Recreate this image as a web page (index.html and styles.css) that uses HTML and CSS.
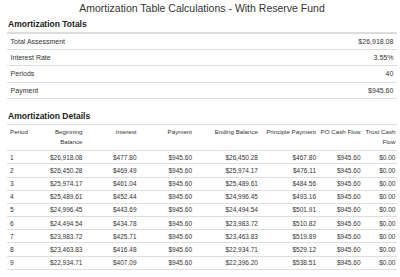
FILE: index.html
```html
<!DOCTYPE html>
<html>
<head>
<meta charset="utf-8">
<title>Amortization Table Calculations</title>
<link rel="stylesheet" href="styles.css">
</head>
<body>
<div class="page">
  <h1 class="title">Amortization Table Calculations - With Reserve Fund</h1>

  <h2 class="section">Amortization Totals</h2>
  <table class="totals">
    <tbody>
      <tr><td>Total Assessment</td><td class="num">$26,918.08</td></tr>
      <tr><td>Interest Rate</td><td class="num">3.55%</td></tr>
      <tr><td>Periods</td><td class="num">40</td></tr>
      <tr><td>Payment</td><td class="num">$945.60</td></tr>
    </tbody>
  </table>

  <h2 class="section section-details">Amortization Details</h2>
  <table class="details">
    <colgroup>
      <col class="c1"><col class="c2"><col class="c3"><col class="c4">
      <col class="c5"><col class="c6"><col class="c7"><col class="c8">
    </colgroup>
    <thead>
      <tr>
        <th class="left one">Period</th>
        <th>Beginning Balance</th>
        <th class="one">Interest</th>
        <th class="one">Payment</th>
        <th class="one">Ending Balance</th>
        <th class="one">Principle Payment</th>
        <th class="one">PO Cash Flow</th>
        <th>Trust Cash Flow</th>
      </tr>
    </thead>
    <tbody>
      <tr><td class="left">1</td><td>$26,918.08</td><td>$477.80</td><td>$945.60</td><td>$26,450.28</td><td>$467.80</td><td>$945.60</td><td>$0.00</td></tr>
      <tr><td class="left">2</td><td>$26,450.28</td><td>$469.49</td><td>$945.60</td><td>$25,974.17</td><td>$476.11</td><td>$945.60</td><td>$0.00</td></tr>
      <tr><td class="left">3</td><td>$25,974.17</td><td>$461.04</td><td>$945.60</td><td>$25,489.61</td><td>$484.56</td><td>$945.60</td><td>$0.00</td></tr>
      <tr><td class="left">4</td><td>$25,489.61</td><td>$452.44</td><td>$945.60</td><td>$24,996.45</td><td>$493.16</td><td>$945.60</td><td>$0.00</td></tr>
      <tr><td class="left">5</td><td>$24,996.45</td><td>$443.69</td><td>$945.60</td><td>$24,494.54</td><td>$501.91</td><td>$945.60</td><td>$0.00</td></tr>
      <tr><td class="left">6</td><td>$24,494.54</td><td>$434.78</td><td>$945.60</td><td>$23,983.72</td><td>$510.82</td><td>$945.60</td><td>$0.00</td></tr>
      <tr><td class="left">7</td><td>$23,983.72</td><td>$425.71</td><td>$945.60</td><td>$23,463.83</td><td>$519.89</td><td>$945.60</td><td>$0.00</td></tr>
      <tr><td class="left">8</td><td>$23,463.83</td><td>$416.48</td><td>$945.60</td><td>$22,934.71</td><td>$529.12</td><td>$945.60</td><td>$0.00</td></tr>
      <tr><td class="left">9</td><td>$22,934.71</td><td>$407.09</td><td>$945.60</td><td>$22,396.20</td><td>$538.51</td><td>$945.60</td><td>$0.00</td></tr>
    </tbody>
  </table>
</div>
</body>
</html>
```

FILE: styles.css
```css
html, body {
  margin: 0;
  padding: 0;
  background: #ffffff;
}

body {
  font-family: "Liberation Sans", Arial, Helvetica, sans-serif;
  color: #333333;
  font-size: 6.5px;
  line-height: 9px;
}

.page {
  padding: 0 3px 0 7px;
  width: 390px;
}

.title {
  margin: 2px 0 0;
  font-size: 10.5px;
  line-height: 12px;
  font-weight: normal;
  text-align: center;
  color: #333333;
}

.section {
  margin: 4.5px 0 3.5px 1px;
  font-size: 8.5px;
  line-height: 10px;
  font-weight: bold;
  color: #222222;
}

.section-details {
  margin-top: 12px;
  margin-bottom: 3px;
}

.totals {
  width: 390px;
  border-collapse: collapse;
  border-top: 2px solid #dddddd;
  font-size: 7px;
}

.totals td {
  padding: 3.1px 3.6px;
  border-bottom: 1px solid #dddddd;
  line-height: 9px;
}

.totals .num {
  text-align: right;
}

.details {
  width: 390px;
  table-layout: fixed;
  border-collapse: collapse;
}

.details .c1 { width: 31px; }
.details .c2 { width: 46px; }
.details .c3 { width: 54px; }
.details .c4 { width: 55.5px; }
.details .c5 { width: 66px; }
.details .c6 { width: 58px; }
.details .c7 { width: 44.5px; }
.details .c8 { width: 35px; }

.details th {
  font-size: 6.2px;
  font-weight: normal;
  text-align: right;
  vertical-align: top;
  line-height: 10.5px;
  padding: 2.2px 1.5px 2.2px 0;
  border-top: 1px solid #dddddd;
  border-bottom: 1px solid #dddddd;
}

.details th.one {
  white-space: nowrap;
}

.details td {
  text-align: right;
  padding: 1.6px 1.5px;
  border-bottom: 1px solid #dddddd;
  white-space: nowrap;
}

.details .left {
  text-align: left;
  padding-left: 3px;
}
```
